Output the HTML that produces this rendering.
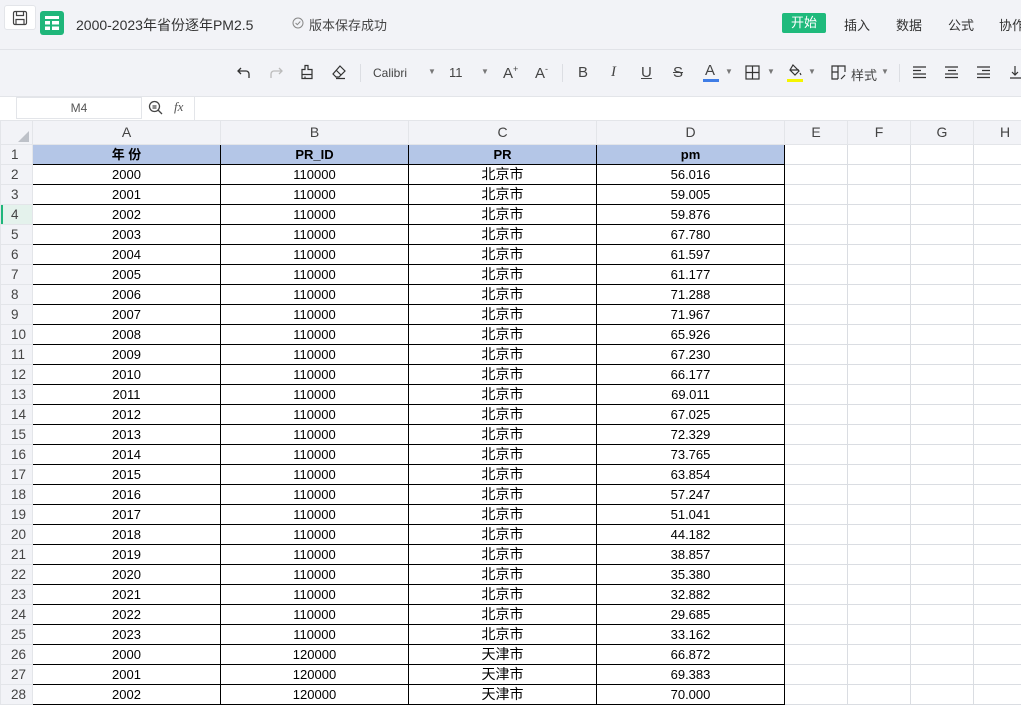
<!DOCTYPE html>
<html><head><meta charset="utf-8"><style>
*{margin:0;padding:0;box-sizing:border-box}
body{width:1021px;height:687px;overflow:hidden;background:#fff;font-family:"Liberation Sans","Noto Sans CJK SC",sans-serif;position:relative}
.top{position:absolute;left:0;top:0;width:1021px;height:96px;background:#f2f3f7}
.sep{position:absolute;left:0;top:49px;width:1021px;height:1px;background:#e1e3e8}
.a{position:absolute;white-space:nowrap}
.t{font-size:14px;color:#333}
.tb{position:absolute;top:64px;font-size:13px;color:#444;white-space:nowrap}
.ic{position:absolute}
.vs{position:absolute;top:64px;width:1px;height:18px;background:#dcdee3}
table{position:absolute;left:0;top:120px;border-collapse:collapse;table-layout:fixed;width:1036px}
td{height:20px;padding:0;font-size:13px;line-height:17px;text-align:center;color:#000;white-space:nowrap;overflow:hidden;border:1px solid #dadde2}
td.r{background:#f2f3f7;color:#444;text-align:left;padding-left:10px;font-size:13.5px;border-color:#e3e5e9}
tr.h td{background:#f2f3f7;color:#444;font-size:14px;height:24px;border-color:#e3e5e9}
tr.b td.d{border:1px solid #000}
tr.b1 td.d{background:#b4c6e7;font-weight:bold}
td.c{font-size:14px}
</style></head><body>
<div class="top"></div><div class="sep"></div>
<div class="a" style="left:4px;top:5px;width:32px;height:25px;background:#fff;border:1px solid #e3e5e9;border-radius:3px"></div>
<svg class="ic" style="left:12px;top:10px" width="16" height="16" viewBox="0 0 16 16" fill="none" stroke="#444" stroke-width="1.2"><rect x="1.5" y="1.5" width="13" height="13" rx="1.5"/><path d="M4.5 1.5v4h7v-4M4 14.5v-5h8v5"/></svg>
<div class="a" style="left:40px;top:11px;width:24px;height:24px;background:#1fb67a;border-radius:3px"></div>
<svg class="ic" style="left:44px;top:15px" width="16" height="16" viewBox="0 0 16 16" fill="#fff"><rect x="1" y="1" width="14" height="3"/><rect x="1" y="6" width="5" height="3.5"/><rect x="8" y="6" width="7" height="3.5"/><rect x="1" y="11.5" width="5" height="3.5"/><rect x="8" y="11.5" width="7" height="3.5"/></svg>
<div class="a t" style="left:76px;top:15px;font-size:14px;color:#333">2000-2023年省份逐年PM2.5</div>
<svg class="ic" style="left:292px;top:17px" width="12" height="12" viewBox="0 0 12 12" fill="none" stroke="#888" stroke-width="1"><circle cx="6" cy="6" r="5"/><path d="M3.6 6l1.7 1.7 3-3.2"/></svg>
<div class="a" style="left:309px;top:15px;font-size:13px;color:#444">版本保存成功</div>
<div class="a" style="left:782px;top:13px;width:44px;height:20px;background:#1fba7c;border-radius:2px;color:#fff;font-size:13px;text-align:center;line-height:20px">开始</div>
<div class="a" style="left:844px;top:15px;font-size:13px;color:#333">插入</div>
<div class="a" style="left:896px;top:15px;font-size:13px;color:#333">数据</div>
<div class="a" style="left:948px;top:15px;font-size:13px;color:#333">公式</div>
<div class="a" style="left:999px;top:15px;font-size:13px;color:#333">协作</div>
<svg class="ic" style="left:236px;top:65px" width="16" height="16" viewBox="0 0 16 16" fill="none" stroke="#333" stroke-width="1.3"><path d="M5 3L2 6l3 3M2 6h8a3 3 0 013 3v4"/></svg>
<svg class="ic" style="left:268px;top:65px" width="16" height="16" viewBox="0 0 16 16" fill="none" stroke="#bbb" stroke-width="1.3"><path d="M11 3l3 3-3 3M14 6H6a3 3 0 00-3 3v4"/></svg>
<svg class="ic" style="left:299px;top:64px" width="16" height="16" viewBox="0 0 16 16" fill="none" stroke="#333" stroke-width="1.2"><path d="M6 1.5h3v4h4v5H3v-5h3zM3 10.5v4h10v-4M6 14.5v-2"/></svg>
<svg class="ic" style="left:331px;top:64px" width="16" height="16" viewBox="0 0 16 16" fill="none" stroke="#333" stroke-width="1.2"><path d="M9 2l5 5-6 6H5L2 10zM5 6l5 5M5 14.5h9"/></svg>
<div class="vs" style="left:360px"></div>
<div class="tb" style="left:373px;top:66px;font-size:12px">Calibri</div>
<div class="tb" style="left:428px;top:67px;font-size:8px;color:#777">▼</div>
<div class="tb" style="left:449px;top:65px">11</div>
<div class="tb" style="left:481px;top:67px;font-size:8px;color:#777">▼</div>
<div class="tb" style="left:503px;top:64px;font-size:15px">A<sup style="font-size:9px">+</sup></div>
<div class="tb" style="left:535px;top:64px;font-size:15px">A<sup style="font-size:9px">-</sup></div>
<div class="vs" style="left:562px"></div>
<div class="tb" style="left:578px;top:64px;font-size:15px">B</div>
<div class="tb" style="left:611px;top:64px;font-size:15px;font-style:italic;font-family:'Liberation Serif'">I</div>
<div class="tb" style="left:641px;top:64px;font-size:15px;text-decoration:underline">U</div>
<div class="tb" style="left:673px;top:64px;font-size:15px;text-decoration:line-through">S</div>
<div class="tb" style="left:705px;top:62px;font-size:15px">A</div>
<div class="a" style="left:703px;top:79px;width:16px;height:3px;background:#3f7de6"></div>
<div class="tb" style="left:725px;top:67px;font-size:8px;color:#777">▼</div>
<svg class="ic" style="left:745px;top:65px" width="15" height="15" viewBox="0 0 15 15" fill="none" stroke="#333" stroke-width="1.2"><rect x="1" y="1" width="13" height="13"/><path d="M7.5 1v13M1 7.5h13"/></svg>
<div class="tb" style="left:767px;top:67px;font-size:8px;color:#777">▼</div>
<svg class="ic" style="left:787px;top:64px" width="16" height="14" viewBox="0 0 16 14" fill="none" stroke="#333" stroke-width="1.2"><path d="M6 1l6 6-4 4-5-5zM3 6h9M13 9l1 2"/></svg>
<div class="a" style="left:787px;top:79px;width:16px;height:3px;background:#f5f500"></div>
<div class="tb" style="left:808px;top:67px;font-size:8px;color:#777">▼</div>
<svg class="ic" style="left:831px;top:65px" width="15" height="15" viewBox="0 0 15 15" fill="none" stroke="#333" stroke-width="1.2"><path d="M14 7V1H1v13h6M1 7h6V1M7 7v7"/><path d="M10 14l4-4"/></svg>
<div class="tb" style="left:851px;top:65px">样式</div>
<div class="tb" style="left:881px;top:67px;font-size:8px;color:#777">▼</div>
<div class="vs" style="left:899px"></div>
<svg class="ic" style="left:913px;top:66px" width="14" height="13" viewBox="0 0 14 13" stroke="#333" stroke-width="1.2"><path d="M0 1h13M0 4.5h8M0 8h13M0 11.5h13"/></svg>
<svg class="ic" style="left:945px;top:66px" width="14" height="13" viewBox="0 0 14 13" stroke="#333" stroke-width="1.2"><path d="M0 1h13M3 4.5h8M0 8h13M0 11.5h13"/></svg>
<svg class="ic" style="left:977px;top:66px" width="14" height="13" viewBox="0 0 14 13" stroke="#333" stroke-width="1.2"><path d="M0 1h13M5 4.5h8M0 8h13M0 11.5h13"/></svg>
<svg class="ic" style="left:1010px;top:66px" width="11" height="13" viewBox="0 0 11 13" fill="none" stroke="#333" stroke-width="1.2"><path d="M5 0v9M2 6l3 3 3-3M0 12h11"/></svg>
<div class="a" style="left:0;top:96px;width:1021px;height:24px;background:#fff;border-top:1px solid #e3e5e9"></div>
<div class="a" style="left:16px;top:97px;width:126px;height:22px;border:1px solid #e3e5e9;font-size:12px;color:#555;text-align:center;line-height:21px">M4</div>
<svg class="ic" style="left:148px;top:100px" width="16" height="16" viewBox="0 0 16 16" fill="none" stroke="#444" stroke-width="1.3"><circle cx="6.5" cy="6.5" r="5"/><path d="M10 10l4 4M4.5 6h4M4.5 8h4"/></svg>
<div class="a" style="left:174px;top:99px;font-family:'Liberation Serif';font-style:italic;font-size:13px;color:#555">fx</div>
<div class="a" style="left:194px;top:96px;width:1px;height:24px;background:#e3e5e9"></div>
<table>
<colgroup><col style="width:32px"><col style="width:188px"><col style="width:188px"><col style="width:188px"><col style="width:188px"><col style="width:63px"><col style="width:63px"><col style="width:63px"><col style="width:63px"></colgroup>
<tr class="h"><td class="r" style="padding:0;position:relative"><svg style="position:absolute;left:17px;top:10px" width="11" height="11"><path d="M11 0V11H0z" fill="#bdc1c8"/></svg></td><td>A</td><td>B</td><td>C</td><td>D</td><td>E</td><td>F</td><td>G</td><td>H</td></tr>
<tr class="b b1"><td class="r">1</td><td class="d">年 份</td><td class="d">PR_ID</td><td class="d">PR</td><td class="d">pm</td><td></td><td></td><td></td><td></td></tr>
<tr class="b"><td class="r">2</td><td class="d">2000</td><td class="d">110000</td><td class="d c">北京市</td><td class="d">56.016</td><td></td><td></td><td></td><td></td></tr>
<tr class="b"><td class="r">3</td><td class="d">2001</td><td class="d">110000</td><td class="d c">北京市</td><td class="d">59.005</td><td></td><td></td><td></td><td></td></tr>
<tr class="b"><td class="r" style="background:#e4f2ec;box-shadow:inset 2px 0 0 #1fb67a">4</td><td class="d">2002</td><td class="d">110000</td><td class="d c">北京市</td><td class="d">59.876</td><td></td><td></td><td></td><td></td></tr>
<tr class="b"><td class="r">5</td><td class="d">2003</td><td class="d">110000</td><td class="d c">北京市</td><td class="d">67.780</td><td></td><td></td><td></td><td></td></tr>
<tr class="b"><td class="r">6</td><td class="d">2004</td><td class="d">110000</td><td class="d c">北京市</td><td class="d">61.597</td><td></td><td></td><td></td><td></td></tr>
<tr class="b"><td class="r">7</td><td class="d">2005</td><td class="d">110000</td><td class="d c">北京市</td><td class="d">61.177</td><td></td><td></td><td></td><td></td></tr>
<tr class="b"><td class="r">8</td><td class="d">2006</td><td class="d">110000</td><td class="d c">北京市</td><td class="d">71.288</td><td></td><td></td><td></td><td></td></tr>
<tr class="b"><td class="r">9</td><td class="d">2007</td><td class="d">110000</td><td class="d c">北京市</td><td class="d">71.967</td><td></td><td></td><td></td><td></td></tr>
<tr class="b"><td class="r">10</td><td class="d">2008</td><td class="d">110000</td><td class="d c">北京市</td><td class="d">65.926</td><td></td><td></td><td></td><td></td></tr>
<tr class="b"><td class="r">11</td><td class="d">2009</td><td class="d">110000</td><td class="d c">北京市</td><td class="d">67.230</td><td></td><td></td><td></td><td></td></tr>
<tr class="b"><td class="r">12</td><td class="d">2010</td><td class="d">110000</td><td class="d c">北京市</td><td class="d">66.177</td><td></td><td></td><td></td><td></td></tr>
<tr class="b"><td class="r">13</td><td class="d">2011</td><td class="d">110000</td><td class="d c">北京市</td><td class="d">69.011</td><td></td><td></td><td></td><td></td></tr>
<tr class="b"><td class="r">14</td><td class="d">2012</td><td class="d">110000</td><td class="d c">北京市</td><td class="d">67.025</td><td></td><td></td><td></td><td></td></tr>
<tr class="b"><td class="r">15</td><td class="d">2013</td><td class="d">110000</td><td class="d c">北京市</td><td class="d">72.329</td><td></td><td></td><td></td><td></td></tr>
<tr class="b"><td class="r">16</td><td class="d">2014</td><td class="d">110000</td><td class="d c">北京市</td><td class="d">73.765</td><td></td><td></td><td></td><td></td></tr>
<tr class="b"><td class="r">17</td><td class="d">2015</td><td class="d">110000</td><td class="d c">北京市</td><td class="d">63.854</td><td></td><td></td><td></td><td></td></tr>
<tr class="b"><td class="r">18</td><td class="d">2016</td><td class="d">110000</td><td class="d c">北京市</td><td class="d">57.247</td><td></td><td></td><td></td><td></td></tr>
<tr class="b"><td class="r">19</td><td class="d">2017</td><td class="d">110000</td><td class="d c">北京市</td><td class="d">51.041</td><td></td><td></td><td></td><td></td></tr>
<tr class="b"><td class="r">20</td><td class="d">2018</td><td class="d">110000</td><td class="d c">北京市</td><td class="d">44.182</td><td></td><td></td><td></td><td></td></tr>
<tr class="b"><td class="r">21</td><td class="d">2019</td><td class="d">110000</td><td class="d c">北京市</td><td class="d">38.857</td><td></td><td></td><td></td><td></td></tr>
<tr class="b"><td class="r">22</td><td class="d">2020</td><td class="d">110000</td><td class="d c">北京市</td><td class="d">35.380</td><td></td><td></td><td></td><td></td></tr>
<tr class="b"><td class="r">23</td><td class="d">2021</td><td class="d">110000</td><td class="d c">北京市</td><td class="d">32.882</td><td></td><td></td><td></td><td></td></tr>
<tr class="b"><td class="r">24</td><td class="d">2022</td><td class="d">110000</td><td class="d c">北京市</td><td class="d">29.685</td><td></td><td></td><td></td><td></td></tr>
<tr class="b"><td class="r">25</td><td class="d">2023</td><td class="d">110000</td><td class="d c">北京市</td><td class="d">33.162</td><td></td><td></td><td></td><td></td></tr>
<tr class="b"><td class="r">26</td><td class="d">2000</td><td class="d">120000</td><td class="d c">天津市</td><td class="d">66.872</td><td></td><td></td><td></td><td></td></tr>
<tr class="b"><td class="r">27</td><td class="d">2001</td><td class="d">120000</td><td class="d c">天津市</td><td class="d">69.383</td><td></td><td></td><td></td><td></td></tr>
<tr class="b"><td class="r">28</td><td class="d">2002</td><td class="d">120000</td><td class="d c">天津市</td><td class="d">70.000</td><td></td><td></td><td></td><td></td></tr>
</table>
</body></html>
